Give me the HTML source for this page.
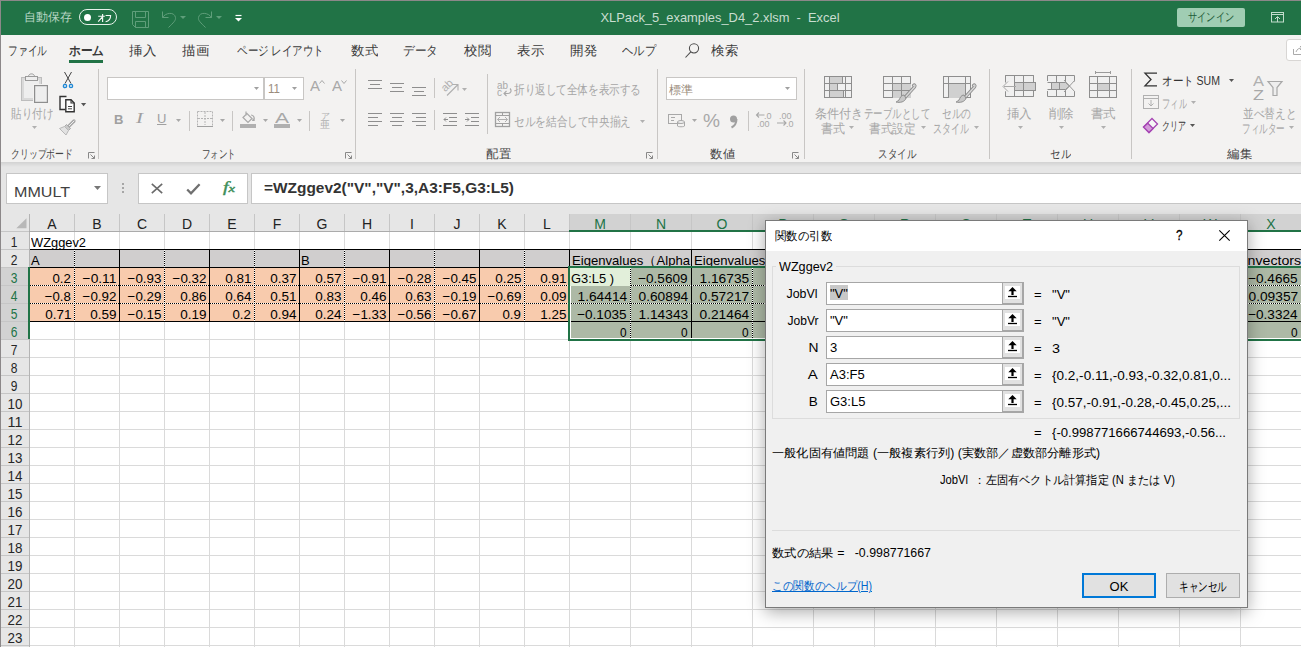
<!DOCTYPE html>
<html><head><meta charset="utf-8"><style>
html,body{margin:0;padding:0;}
body{width:1301px;height:647px;overflow:hidden;position:relative;background:#fff;font-family:"Liberation Sans", sans-serif;}
div{box-sizing:border-box;}
svg{overflow:visible;}
</style></head><body>
<div style="position:absolute;left:0px;top:0px;width:1301px;height:1px;background:#8c8889"></div><div style="position:absolute;left:0px;top:0px;width:1px;height:647px;background:#8c8889"></div><div style="position:absolute;left:1px;top:1px;width:1300px;height:34px;background:#217346"></div><div id="t1" style="position:absolute;left:24px;top:11.34px;font-size:12px;line-height:12px;color:#b8d6c4;white-space:nowrap;transform:scaleX(1.0000);transform-origin:0 50%;">自動保存</div><div style="position:absolute;left:79px;top:9px;width:38px;height:16px;border:1px solid #e8f1eb;border-radius:8px"></div><div style="position:absolute;left:84px;top:14px;width:7px;height:7px;background:#fff;border-radius:50%"></div><svg style="position:absolute;left:97px;top:13px;" width="15" height="10" viewBox="0 0 15 10"><g fill="none" stroke="#f4f8f5" stroke-width="1.15"><path d="M1.2 3.2h6.6M5.6 1v8M5.4 3.8L1.2 8.6M8.6 2.5h5c0 3.2-1.6 5.6-5 6.3"/></g></svg><svg style="position:absolute;left:131px;top:10px;" width="19" height="19" viewBox="0 0 19 19"><g fill="none" stroke="#5f9e7a" stroke-width="1"><path d="M1.5 1.5h16v16h-13l-3-3z"/><path d="M4.5 1.5v6h10v-6"/><path d="M4.5 17.5v-6h10v6"/></g></svg><svg style="position:absolute;left:160px;top:10px;" width="30" height="19" viewBox="0 0 30 19"><g fill="none" stroke="#5f9e7a" stroke-width="1"><path d="M2.5 1.5v6h6"/><path d="M2.5 7.5c3-5 12-6 13 0 .5 3-2 5-7 10"/></g><path d="M20 6h6l-3 3z" fill="#5f9e7a"/></svg><svg style="position:absolute;left:195px;top:10px;" width="30" height="19" viewBox="0 0 30 19"><g fill="none" stroke="#5f9e7a" stroke-width="1"><path d="M16.5 1.5v6h-6"/><path d="M16.5 7.5c-3-5 -12-6 -13 0 -.5 3 2 5 7 10"/></g><path d="M21 6h6l-3 3z" fill="#5f9e7a"/></svg><svg style="position:absolute;left:235px;top:14px;" width="8" height="8" viewBox="0 0 8 8"><path d="M0.5 1.5h6" stroke="#fff" stroke-width="1.2"/><path d="M0 4h7l-3.5 3.5z" fill="#fff"/></svg><div id="t2" style="position:absolute;left:720px;top:11.00px;font-size:13px;line-height:13px;color:#c9ded1;white-space:nowrap;transform:translateX(-50%) scaleX(0.9903);transform-origin:50% 50%;">XLPack_5_examples_D4_2.xlsm&nbsp; - &nbsp;Excel</div><div style="position:absolute;left:1177px;top:8px;width:68px;height:19px;background:#a0cdb3;border-radius:2px"></div><div id="t3" style="position:absolute;left:1211px;top:11.34px;font-size:12px;line-height:12px;color:#1d5a37;white-space:nowrap;transform:translateX(-50%) scaleX(0.7667);transform-origin:50% 50%;">サインイン</div><svg style="position:absolute;left:1270px;top:11px;" width="16" height="13" viewBox="0 0 16 13"><g fill="none" stroke="#c2ddcc" stroke-width="1"><rect x="1.5" y="1.5" width="12" height="9.5"/><path d="M1.5 3.5h12"/><path d="M7.5 11v-5M5 8l2.5-2.5 2.5 2.5"/></g></svg><div style="position:absolute;left:1px;top:35px;width:1300px;height:127px;background:#f3f2f1"></div><div id="t4" style="position:absolute;left:8px;top:44.00px;font-size:13px;line-height:13px;color:#3a3a3a;white-space:nowrap;transform:scaleX(0.7500);transform-origin:0 50%;">ファイル</div><div id="t5" style="position:absolute;left:69px;top:44.00px;font-size:13px;line-height:13px;color:#3a3a3a;white-space:nowrap;transform:scaleX(0.8974);transform-origin:0 50%;"><b>ホーム</b></div><div id="t6" style="position:absolute;left:129px;top:44.00px;font-size:13px;line-height:13px;color:#3a3a3a;white-space:nowrap;transform:scaleX(1.0385);transform-origin:0 50%;">挿入</div><div id="t7" style="position:absolute;left:182px;top:44.00px;font-size:13px;line-height:13px;color:#3a3a3a;white-space:nowrap;transform:scaleX(1.0385);transform-origin:0 50%;">描画</div><div id="t8" style="position:absolute;left:237px;top:44.00px;font-size:13px;line-height:13px;color:#3a3a3a;white-space:nowrap;transform:scaleX(0.8084);transform-origin:0 50%;">ページ レイアウト</div><div id="t9" style="position:absolute;left:351px;top:44.00px;font-size:13px;line-height:13px;color:#3a3a3a;white-space:nowrap;transform:scaleX(1.0385);transform-origin:0 50%;">数式</div><div id="t10" style="position:absolute;left:403px;top:44.00px;font-size:13px;line-height:13px;color:#3a3a3a;white-space:nowrap;transform:scaleX(0.8974);transform-origin:0 50%;">データ</div><div id="t11" style="position:absolute;left:464px;top:44.00px;font-size:13px;line-height:13px;color:#3a3a3a;white-space:nowrap;transform:scaleX(1.0385);transform-origin:0 50%;">校閲</div><div id="t12" style="position:absolute;left:517px;top:44.00px;font-size:13px;line-height:13px;color:#3a3a3a;white-space:nowrap;transform:scaleX(1.0385);transform-origin:0 50%;">表示</div><div id="t13" style="position:absolute;left:570px;top:44.00px;font-size:13px;line-height:13px;color:#3a3a3a;white-space:nowrap;transform:scaleX(1.0385);transform-origin:0 50%;">開発</div><div id="t14" style="position:absolute;left:622px;top:44.00px;font-size:13px;line-height:13px;color:#3a3a3a;white-space:nowrap;transform:scaleX(0.8718);transform-origin:0 50%;">ヘルプ</div><div id="t15" style="position:absolute;left:711px;top:44.00px;font-size:13px;line-height:13px;color:#3a3a3a;white-space:nowrap;transform:scaleX(1.0385);transform-origin:0 50%;">検索</div><div style="position:absolute;left:69px;top:60px;width:34px;height:3px;background:#217346"></div><svg style="position:absolute;left:684px;top:42px;" width="16" height="17" viewBox="0 0 16 17"><g fill="none" stroke="#4a4a4a" stroke-width="1.05"><circle cx="10" cy="6.3" r="4.6"/><path d="M6.8 9.8l-5.3 5.7"/></g></svg><div style="position:absolute;left:1286px;top:39px;width:20px;height:22px;background:#fff;border:1px solid #d8d6d4;border-radius:3px"></div><svg style="position:absolute;left:1293px;top:45px;" width="11" height="10" viewBox="0 0 11 10"><g fill="none" stroke="#aaa" stroke-width="1"><path d="M.5 4v5.5h10"/><path d="M3 7c1-3 3-4 6-4M7 1l2 2-2 2"/></g></svg><div style="position:absolute;left:98px;top:69px;width:1px;height:90px;background:#c8c6c4"></div><div style="position:absolute;left:355px;top:69px;width:1px;height:90px;background:#c8c6c4"></div><div style="position:absolute;left:657px;top:69px;width:1px;height:90px;background:#c8c6c4"></div><div style="position:absolute;left:804px;top:69px;width:1px;height:90px;background:#c8c6c4"></div><div style="position:absolute;left:989px;top:69px;width:1px;height:90px;background:#c8c6c4"></div><div style="position:absolute;left:1131px;top:69px;width:1px;height:90px;background:#c8c6c4"></div><div id="t16" style="position:absolute;left:11px;top:147.84px;font-size:12px;line-height:12px;color:#444;white-space:nowrap;transform:scaleX(0.7381);transform-origin:0 50%;">クリップボード</div><div id="t17" style="position:absolute;left:202px;top:147.84px;font-size:12px;line-height:12px;color:#444;white-space:nowrap;transform:scaleX(0.7083);transform-origin:0 50%;">フォント</div><div id="t18" style="position:absolute;left:486px;top:147.84px;font-size:12px;line-height:12px;color:#444;white-space:nowrap;transform:scaleX(1.0417);transform-origin:0 50%;">配置</div><div id="t19" style="position:absolute;left:710px;top:147.84px;font-size:12px;line-height:12px;color:#444;white-space:nowrap;transform:scaleX(1.0417);transform-origin:0 50%;">数値</div><div id="t20" style="position:absolute;left:878px;top:147.84px;font-size:12px;line-height:12px;color:#444;white-space:nowrap;transform:scaleX(0.7917);transform-origin:0 50%;">スタイル</div><div id="t21" style="position:absolute;left:1050px;top:147.84px;font-size:12px;line-height:12px;color:#444;white-space:nowrap;transform:scaleX(0.8750);transform-origin:0 50%;">セル</div><div id="t22" style="position:absolute;left:1227px;top:147.84px;font-size:12px;line-height:12px;color:#444;white-space:nowrap;transform:scaleX(1.0417);transform-origin:0 50%;">編集</div><svg style="position:absolute;left:88px;top:152px;" width="7" height="7" viewBox="0 0 7 7"><g fill="none" stroke="#888" stroke-width="1"><path d="M.5 6.5v-6h6"/><path d="M2.5 2.5l4 4M6.5 3.5v3h-3"/></g></svg><svg style="position:absolute;left:345px;top:152px;" width="7" height="7" viewBox="0 0 7 7"><g fill="none" stroke="#888" stroke-width="1"><path d="M.5 6.5v-6h6"/><path d="M2.5 2.5l4 4M6.5 3.5v3h-3"/></g></svg><svg style="position:absolute;left:646px;top:152px;" width="7" height="7" viewBox="0 0 7 7"><g fill="none" stroke="#888" stroke-width="1"><path d="M.5 6.5v-6h6"/><path d="M2.5 2.5l4 4M6.5 3.5v3h-3"/></g></svg><svg style="position:absolute;left:792px;top:152px;" width="7" height="7" viewBox="0 0 7 7"><g fill="none" stroke="#888" stroke-width="1"><path d="M.5 6.5v-6h6"/><path d="M2.5 2.5l4 4M6.5 3.5v3h-3"/></g></svg><svg style="position:absolute;left:20px;top:72px;" width="30" height="32" viewBox="0 0 30 32"><rect x="1.5" y="5.5" width="20" height="23" fill="#d9d9d9" stroke="#bdbdbd"/><rect x="4" y="8" width="15" height="18" fill="#eeeeee"/><path d="M8.5 4.5c0-3.5 6-3.5 6 0" fill="#eee" stroke="#9a9a9a"/><rect x="5.5" y="4.5" width="12" height="4" fill="#eee" stroke="#9a9a9a"/><rect x="13" y="12" width="16" height="20" fill="#f3f2f1"/><rect x="14.6" y="13.6" width="12.8" height="16.8" fill="#eee" stroke="#8e8e8e" stroke-width="1.2"/></svg><div id="t23" style="position:absolute;left:11px;top:107.00px;font-size:13px;line-height:13px;color:#a6a6a6;white-space:nowrap;transform:scaleX(0.8077);transform-origin:0 50%;">貼り付け</div><svg style="position:absolute;left:32px;top:126px;" width="6" height="4" viewBox="0 0 6 4"><path d="M0 0h5l-2.5 3z" fill="#b0b0b0"/></svg><svg style="position:absolute;left:62px;top:71px;" width="12" height="18" viewBox="0 0 12 18"><g fill="none" stroke="#444" stroke-width="1"><path d="M2.5 1l6.5 11.5M9.5 1l-6.5 11.5"/></g><g fill="none" stroke="#1e88d6" stroke-width="1.4"><circle cx="3" cy="15" r="1.6"/><circle cx="9" cy="15" r="1.6"/></g></svg><svg style="position:absolute;left:58px;top:95px;" width="19" height="18" viewBox="0 0 19 18"><path d="M8.5 1.5h-6.5v13h5" fill="#fafafa" stroke="#333" stroke-width="1.4"/><path d="M7.8 4.8h5.2l3.2 3.2v8.7h-8.4z" fill="#fff" stroke="#333" stroke-width="1.4"/><path d="M13 4.8v3.2h3.2" fill="none" stroke="#333" stroke-width="1.1"/><path d="M10 11.5h4M10 13.8h4" stroke="#444" stroke-width="1"/></svg><svg style="position:absolute;left:81px;top:103px;" width="6" height="4" viewBox="0 0 6 4"><path d="M0 0h5.2l-2.6 3.2z" fill="#555"/></svg><svg style="position:absolute;left:59px;top:119px;" width="17" height="17" viewBox="0 0 17 17"><path d="M15 2l-5.5 5.5" stroke="#a8a8a8" stroke-width="3.2" stroke-linecap="round"/><path d="M15 2l-5.5 5.5" stroke="#f0f0f0" stroke-width="1" stroke-linecap="round"/><path d="M7.5 5.5l4 4-2 2-4-4z" fill="#c8c8c8" stroke="#a8a8a8"/><path d="M5.5 7.5l4 4-2.5 4.5-6.5-6.5z" fill="#e2e2e2" stroke="#b8b8b8"/></svg><div style="position:absolute;left:107px;top:77px;width:157px;height:23px;background:#fff;border:1px solid #c8c6c4"></div><div style="position:absolute;left:264px;top:77px;width:40px;height:23px;background:#fff;border:1px solid #c8c6c4"></div><svg style="position:absolute;left:254px;top:87px;" width="6" height="4" viewBox="0 0 6 4"><path d="M0 0h5l-2.5 3z" fill="#a0a0a0"/></svg><svg style="position:absolute;left:292px;top:87px;" width="6" height="4" viewBox="0 0 6 4"><path d="M0 0h5l-2.5 3z" fill="#a0a0a0"/></svg><div id="t24" style="position:absolute;left:268px;top:82.84px;font-size:12px;line-height:12px;color:#9a8c7c;white-space:nowrap;transform:scaleX(0.9624);transform-origin:0 50%;">11</div><div id="t25" style="position:absolute;left:310px;top:79.15px;font-size:14px;line-height:14px;color:#a8a8a8;white-space:nowrap;transform:scaleX(1.0702);transform-origin:0 50%;">A</div><svg style="position:absolute;left:319px;top:80px;" width="6" height="4" viewBox="0 0 6 4"><path d="M.5 3.5l2.5-3 2.5 3" fill="none" stroke="#a8a8a8"/></svg><div id="t26" style="position:absolute;left:332px;top:79.15px;font-size:14px;line-height:14px;color:#a8a8a8;white-space:nowrap;transform:scaleX(1.0702);transform-origin:0 50%;">A</div><svg style="position:absolute;left:341px;top:80px;" width="6" height="4" viewBox="0 0 6 4"><path d="M.5 .5l2.5 3 2.5-3" fill="none" stroke="#a8a8a8"/></svg><div style="position:absolute;left:114px;top:113.00px;font-size:13px;line-height:13px;color:#a0a0a0;white-space:nowrap;"><b>B</b></div><div id="t28" style="position:absolute;left:136px;top:112.15px;font-size:14px;line-height:14px;color:#a0a0a0;white-space:nowrap;transform:scaleX(1.4983);transform-origin:0 50%;font-family:&quot;Liberation Serif&quot;,serif"><i>I</i></div><div style="position:absolute;left:157px;top:112.00px;font-size:13px;line-height:13px;color:#a0a0a0;white-space:nowrap;"><u>U</u></div><svg style="position:absolute;left:176px;top:119px;" width="6" height="4" viewBox="0 0 6 4"><path d="M0 0h5l-2.5 3z" fill="#a8a8a8"/></svg><div style="position:absolute;left:189px;top:111px;width:1px;height:20px;background:#c8c6c4"></div><svg style="position:absolute;left:197px;top:111px;" width="16" height="16" viewBox="0 0 16 16"><g fill="none" stroke="#b4b4b4" stroke-width="1" stroke-dasharray="2 1"><path d="M.5 .5h15v14M.5 .5v14M8 1v13M1 7.5h14"/></g><path d="M0 15.5h16" stroke="#a0a0a0" stroke-width="1"/></svg><svg style="position:absolute;left:220px;top:119px;" width="6" height="4" viewBox="0 0 6 4"><path d="M0 0h5l-2.5 3z" fill="#a8a8a8"/></svg><div style="position:absolute;left:232px;top:111px;width:1px;height:20px;background:#c8c6c4"></div><svg style="position:absolute;left:240px;top:110px;" width="17" height="19" viewBox="0 0 17 19"><g fill="none" stroke="#a8a8a8" stroke-width="1.2"><path d="M6 1.5v4M3 7.5l4-4 5 5-4 4z"/><path d="M11 5c2 0 4 2 3 5"/></g><path d="M13 8l2 3h-3z" fill="#a8a8a8"/><rect x="0" y="14" width="16" height="4" fill="#b0b0b0"/></svg><svg style="position:absolute;left:263px;top:119px;" width="6" height="4" viewBox="0 0 6 4"><path d="M0 0h5l-2.5 3z" fill="#a8a8a8"/></svg><div id="t30" style="position:absolute;left:275px;top:110.30px;font-size:15px;line-height:15px;color:#a8a8a8;white-space:nowrap;transform:scaleX(1.3978);transform-origin:0 50%;">A</div><div style="position:absolute;left:274px;top:124px;width:16px;height:4px;background:#b0b0b0"></div><svg style="position:absolute;left:297px;top:119px;" width="6" height="4" viewBox="0 0 6 4"><path d="M0 0h5l-2.5 3z" fill="#a8a8a8"/></svg><div style="position:absolute;left:309px;top:111px;width:1px;height:20px;background:#c8c6c4"></div><div style="position:absolute;left:321px;top:112.38px;font-size:9px;line-height:9px;color:#b0b0b0;white-space:nowrap;">ア</div><div style="position:absolute;left:320px;top:119.53px;font-size:10px;line-height:10px;color:#b0b0b0;white-space:nowrap;">亜</div><svg style="position:absolute;left:340px;top:119px;" width="6" height="4" viewBox="0 0 6 4"><path d="M0 0h5l-2.5 3z" fill="#a8a8a8"/></svg><svg style="position:absolute;left:368px;top:80px;" width="16" height="16" viewBox="0 0 16 16"><path d="M0 0.5h14" stroke="#8e8e8e" stroke-width="1"/><path d="M2 4.5h10" stroke="#8e8e8e" stroke-width="1"/><path d="M0 8.5h14" stroke="#8e8e8e" stroke-width="1"/></svg><svg style="position:absolute;left:390px;top:83px;" width="16" height="16" viewBox="0 0 16 16"><path d="M0 0.5h14" stroke="#8e8e8e" stroke-width="1"/><path d="M2 4.5h10" stroke="#8e8e8e" stroke-width="1"/><path d="M0 8.5h14" stroke="#8e8e8e" stroke-width="1"/></svg><svg style="position:absolute;left:412px;top:87px;" width="16" height="16" viewBox="0 0 16 16"><path d="M0 0.5h14" stroke="#8e8e8e" stroke-width="1"/><path d="M2 4.5h10" stroke="#8e8e8e" stroke-width="1"/><path d="M0 8.5h14" stroke="#8e8e8e" stroke-width="1"/></svg><div style="position:absolute;left:434px;top:78px;width:1px;height:20px;background:#c8c6c4"></div><svg style="position:absolute;left:446px;top:83px;" width="13" height="13" viewBox="0 0 13 13"><g fill="none" stroke="#b0b0b0" stroke-width="1.1"><path d="M1 12.5l11-11M6 1.5h6v6"/></g></svg><div style="position:absolute;left:441px;top:79.69px;font-size:11px;line-height:11px;color:#b0b0b0;white-space:nowrap;transform:rotate(-45deg);transform-origin:50% 50%">ab</div><svg style="position:absolute;left:462px;top:88px;" width="6" height="4" viewBox="0 0 6 4"><path d="M0 0h5l-2.5 3z" fill="#b0b0b0"/></svg><svg style="position:absolute;left:368px;top:113px;" width="16" height="16" viewBox="0 0 16 16"><path d="M0 0.5h14" stroke="#8e8e8e" stroke-width="1"/><path d="M0 4.5h10" stroke="#8e8e8e" stroke-width="1"/><path d="M0 8.5h14" stroke="#8e8e8e" stroke-width="1"/><path d="M0 12.5h10" stroke="#8e8e8e" stroke-width="1"/></svg><svg style="position:absolute;left:390px;top:113px;" width="16" height="16" viewBox="0 0 16 16"><path d="M0 0.5h14" stroke="#8e8e8e" stroke-width="1"/><path d="M2 4.5h10" stroke="#8e8e8e" stroke-width="1"/><path d="M0 8.5h14" stroke="#8e8e8e" stroke-width="1"/><path d="M2 12.5h10" stroke="#8e8e8e" stroke-width="1"/></svg><svg style="position:absolute;left:412px;top:113px;" width="16" height="16" viewBox="0 0 16 16"><path d="M0 0.5h14" stroke="#8e8e8e" stroke-width="1"/><path d="M4 4.5h10" stroke="#8e8e8e" stroke-width="1"/><path d="M0 8.5h14" stroke="#8e8e8e" stroke-width="1"/><path d="M4 12.5h10" stroke="#8e8e8e" stroke-width="1"/></svg><div style="position:absolute;left:434px;top:110px;width:1px;height:20px;background:#c8c6c4"></div><svg style="position:absolute;left:443px;top:113px;" width="16" height="14" viewBox="0 0 16 14"><g fill="none" stroke="#8e8e8e" stroke-width="1"><path d="M0 .5h14M6 4.5h8M6 8.5h8M0 12.5h14M1 6.5h4M3 4.5l-2 2 2 2"/></g></svg><svg style="position:absolute;left:465px;top:113px;" width="16" height="14" viewBox="0 0 16 14"><g fill="none" stroke="#8e8e8e" stroke-width="1"><path d="M0 .5h14M6 4.5h8M6 8.5h8M0 12.5h14M0 6.5h4M2 4.5l2 2-2 2"/></g></svg><div style="position:absolute;left:487px;top:74px;width:1px;height:60px;background:#c8c6c4"></div><div id="t34" style="position:absolute;left:497px;top:79.69px;font-size:11px;line-height:11px;color:#a8a8a8;white-space:nowrap;transform:scaleX(0.8980);transform-origin:0 50%;">ab</div><div id="t35" style="position:absolute;left:497px;top:86.69px;font-size:11px;line-height:11px;color:#a8a8a8;white-space:nowrap;transform:scaleX(0.9091);transform-origin:0 50%;">c</div><svg style="position:absolute;left:503px;top:88px;" width="9" height="9" viewBox="0 0 9 9"><path d="M7 .5c2 2 1 5-2 5h-4M3.5 3l-2.5 2.5 2.5 2.5" fill="none" stroke="#a8a8a8" stroke-width="1.1"/></svg><div id="t36" style="position:absolute;left:514px;top:83.00px;font-size:13px;line-height:13px;color:#a6a6a6;white-space:nowrap;transform:scaleX(0.8141);transform-origin:0 50%;">折り返して全体を表示する</div><svg style="position:absolute;left:495px;top:112px;" width="16" height="16" viewBox="0 0 16 16"><g fill="none" stroke="#a0a0a0" stroke-width="1"><rect x=".5" y=".5" width="14" height="14" stroke-width="1.3"/><path d="M.5 3.5h14M.5 11.5h14M7.5 0v3.5M7.5 11.5v3.5"/><path d="M2.5 7.5h10M5 5l-2.5 2.5 2.5 2.5M10 5l2.5 2.5-2.5 2.5" stroke="#b0b0b0"/></g></svg><div id="t37" style="position:absolute;left:514px;top:115.00px;font-size:13px;line-height:13px;color:#a6a6a6;white-space:nowrap;transform:scaleX(0.8182);transform-origin:0 50%;">セルを結合して中央揃え</div><svg style="position:absolute;left:640px;top:120px;" width="6" height="4" viewBox="0 0 6 4"><path d="M0 0h5l-2.5 3z" fill="#b0b0b0"/></svg><div style="position:absolute;left:666px;top:77px;width:131px;height:23px;background:#fff;border:1px solid #c8c6c4"></div><div id="t38" style="position:absolute;left:669px;top:83.84px;font-size:12px;line-height:12px;color:#9a8c7c;white-space:nowrap;transform:scaleX(1.0000);transform-origin:0 50%;">標準</div><svg style="position:absolute;left:785px;top:87px;" width="6" height="4" viewBox="0 0 6 4"><path d="M0 0h5l-2.5 3z" fill="#a0a0a0"/></svg><svg style="position:absolute;left:668px;top:113px;" width="18" height="15" viewBox="0 0 18 15"><g fill="none" stroke="#a8a8a8" stroke-width="1"><rect x=".5" y="1.5" width="13" height="9"/><path d="M3 4.5h4M3 7.5h3"/><ellipse cx="13" cy="9" rx="3.5" ry="1.5" fill="#eee"/><path d="M9.5 9v4c0 1 7 1 7 0v-4"/></g></svg><svg style="position:absolute;left:692px;top:119px;" width="6" height="4" viewBox="0 0 6 4"><path d="M0 0h5l-2.5 3z" fill="#a8a8a8"/></svg><div id="t39" style="position:absolute;left:703px;top:110.92px;font-size:19px;line-height:19px;color:#a8a8a8;white-space:nowrap;transform:scaleX(1.0055);transform-origin:0 50%;">%</div><svg style="position:absolute;left:729px;top:115px;" width="9" height="13" viewBox="0 0 9 13"><circle cx="4.5" cy="4" r="3.5" fill="#a0a0a0"/><path d="M7.5 4c0 4-2 7-5 8.5" stroke="#a0a0a0" stroke-width="2" fill="none"/></svg><div style="position:absolute;left:748px;top:111px;width:1px;height:20px;background:#c8c6c4"></div><div style="position:absolute;left:764px;top:112.38px;font-size:9px;line-height:9px;color:#a8a8a8;white-space:nowrap;">.0</div><div style="position:absolute;left:757px;top:119.88px;font-size:9px;line-height:9px;color:#a8a8a8;white-space:nowrap;">.00</div><svg style="position:absolute;left:755px;top:111px;" width="10" height="8" viewBox="0 0 10 8"><path d="M9.5 4h-8M4 1.5l-2.5 2.5 2.5 2.5" fill="none" stroke="#a8a8a8" stroke-width="1.1"/></svg><div style="position:absolute;left:779px;top:112.38px;font-size:9px;line-height:9px;color:#a8a8a8;white-space:nowrap;">.00</div><div style="position:absolute;left:786px;top:119.88px;font-size:9px;line-height:9px;color:#a8a8a8;white-space:nowrap;">.0</div><svg style="position:absolute;left:777px;top:119px;" width="11" height="8" viewBox="0 0 11 8"><path d="M0 4h9M6.5 1.5l2.5 2.5-2.5 2.5" fill="none" stroke="#a8a8a8" stroke-width="1.1"/></svg><svg style="position:absolute;left:824px;top:76px;" width="40" height="30" viewBox="0 0 40 30"><rect x=".5" y=".5" width="27" height="21" fill="#f0f0f0" stroke="#8e8e8e"/><rect x="6" y="1" width="12" height="6" fill="#d0d0d0"/><rect x="6" y="8" width="7" height="6" fill="#d0d0d0"/><rect x="6" y="15" width="13" height="6" fill="#d0d0d0"/><path d="M5.5 0v22M21.5 0v22M0 7.5h28M0 14.5h28M18.5 1v6M13.5 8v6M19.5 15v6" stroke="#8e8e8e"/></svg><svg style="position:absolute;left:883px;top:76px;" width="40" height="30" viewBox="0 0 40 30"><rect x=".5" y=".5" width="27" height="21" fill="#f0f0f0" stroke="#8e8e8e"/><rect x="10" y="8" width="18" height="14" fill="#d0d0d0"/><path d="M9.5 0v22M18.5 0v22M0 7.5h28M0 14.5h28" stroke="#8e8e8e"/><path d="M30.5 9.5c1-1 2 0 1.2 1.2l-10 11" stroke="#8e8e8e" stroke-width="3.2" stroke-linecap="round" fill="none"/><path d="M30.5 9.5c1-1 2 0 1.2 1.2l-10 11" stroke="#d8d8d8" stroke-width="1.4" stroke-linecap="round" fill="none"/><path d="M21 19c-3 0-4 3-5 5-1 1-3 2-3 2 4 1 9 0 10-4z" fill="#c8c8c8" stroke="#8e8e8e" stroke-width="1"/></svg><svg style="position:absolute;left:943px;top:76px;" width="40" height="30" viewBox="0 0 40 30"><rect x=".5" y=".5" width="27" height="21" fill="#f0f0f0" stroke="#8e8e8e"/><rect x="6" y="8" width="17" height="14" fill="#d0d0d0"/><path d="M5.5 0v22M22.5 0v22M0 7.5h28" stroke="#8e8e8e"/><path d="M30.5 9.5c1-1 2 0 1.2 1.2l-10 11" stroke="#8e8e8e" stroke-width="3.2" stroke-linecap="round" fill="none"/><path d="M30.5 9.5c1-1 2 0 1.2 1.2l-10 11" stroke="#d8d8d8" stroke-width="1.4" stroke-linecap="round" fill="none"/><path d="M21 19c-3 0-4 3-5 5-1 1-3 2-3 2 4 1 9 0 10-4z" fill="#c8c8c8" stroke="#8e8e8e" stroke-width="1"/></svg><div id="t44" style="position:absolute;left:815px;top:107.00px;font-size:13px;line-height:13px;color:#a6a6a6;white-space:nowrap;transform:scaleX(0.9327);transform-origin:0 50%;">条件付き</div><div id="t45" style="position:absolute;left:821px;top:122.00px;font-size:13px;line-height:13px;color:#a6a6a6;white-space:nowrap;transform:scaleX(0.9231);transform-origin:0 50%;">書式</div><svg style="position:absolute;left:849px;top:126px;" width="6" height="4" viewBox="0 0 6 4"><path d="M0 0h5l-2.5 3z" fill="#b0b0b0"/></svg><div id="t46" style="position:absolute;left:864px;top:107.00px;font-size:13px;line-height:13px;color:#a6a6a6;white-space:nowrap;transform:scaleX(0.7253);transform-origin:0 50%;">テーブルとして</div><div id="t47" style="position:absolute;left:869px;top:122.00px;font-size:13px;line-height:13px;color:#a6a6a6;white-space:nowrap;transform:scaleX(0.9038);transform-origin:0 50%;">書式設定</div><svg style="position:absolute;left:921px;top:126px;" width="6" height="4" viewBox="0 0 6 4"><path d="M0 0h5l-2.5 3z" fill="#b0b0b0"/></svg><div id="t48" style="position:absolute;left:942px;top:107.00px;font-size:13px;line-height:13px;color:#a6a6a6;white-space:nowrap;transform:scaleX(0.7436);transform-origin:0 50%;">セルの</div><div id="t49" style="position:absolute;left:933px;top:122.00px;font-size:13px;line-height:13px;color:#a6a6a6;white-space:nowrap;transform:scaleX(0.6923);transform-origin:0 50%;">スタイル</div><svg style="position:absolute;left:974px;top:126px;" width="6" height="4" viewBox="0 0 6 4"><path d="M0 0h5l-2.5 3z" fill="#b0b0b0"/></svg><svg style="position:absolute;left:1002px;top:75px;" width="36" height="24" viewBox="0 0 36 24"><path d="M3.5 7v-6.5h28v21h-28v-5M3.5 7v-0" fill="none" stroke="#8e8e8e"/><rect x="4" y="1" width="27" height="6" fill="#f0f0f0"/><rect x="4" y="15" width="27" height="6" fill="#f0f0f0"/><path d="M3.5 .5h28v21h-28v-5M3.5 7.5v-7" fill="none" stroke="#8e8e8e"/><path d="M12.5 1v6M21.5 1v6M12.5 15v7M21.5 15v7" stroke="#8e8e8e"/><rect x="12.5" y="7.5" width="21" height="8" fill="#d0d0d0" stroke="#8e8e8e"/><path d="M21.5 8v7" stroke="#8e8e8e"/><path d="M14 11.5h-12M6 6.5l-5 5 5 5" fill="none" stroke="#a8a8a8" stroke-width="1"/></svg><svg style="position:absolute;left:1046px;top:75px;" width="32" height="24" viewBox="0 0 32 24"><rect x="1" y="1" width="27" height="6" fill="#f0f0f0"/><rect x="1" y="15" width="27" height="6" fill="#f0f0f0"/><path d="M1.5 6v-5.5h27v6M1.5 16v5.5h27v-5M1.5 7.5h18M1.5 14.5h18M10.5 1v6M19.5 1v6M10.5 15v6M19.5 15v6" fill="none" stroke="#8e8e8e"/><path d="M5.5 7.5h14l4 3.5-4 3.5h-14z" fill="#d0d0d0" stroke="#8e8e8e"/><path d="M13.5 8v6" stroke="#8e8e8e"/><path d="M18 5l11 12M29 5l-11 12" stroke="#9a9a9a"/></svg><svg style="position:absolute;left:1089px;top:70px;" width="30" height="30" viewBox="0 0 30 30"><rect x=".5" y="6.5" width="27" height="21" fill="#f0f0f0" stroke="#8e8e8e"/><rect x="8" y="13" width="13" height="7" fill="#d0d0d0"/><path d="M8.5 6v22M20.5 6v22M0 13.5h28M0 20.5h28" stroke="#8e8e8e"/><path d="M6.5 2.5h15M6.5 1v3M21.5 1v3" stroke="#9a9a9a"/></svg><div id="t50" style="position:absolute;left:1007px;top:107.00px;font-size:13px;line-height:13px;color:#a6a6a6;white-space:nowrap;transform:scaleX(0.9615);transform-origin:0 50%;">挿入</div><div id="t51" style="position:absolute;left:1049px;top:107.00px;font-size:13px;line-height:13px;color:#a6a6a6;white-space:nowrap;transform:scaleX(0.9615);transform-origin:0 50%;">削除</div><div id="t52" style="position:absolute;left:1091px;top:107.00px;font-size:13px;line-height:13px;color:#a6a6a6;white-space:nowrap;transform:scaleX(0.9615);transform-origin:0 50%;">書式</div><svg style="position:absolute;left:1018px;top:126px;" width="6" height="4" viewBox="0 0 6 4"><path d="M0 0h5l-2.5 3z" fill="#b0b0b0"/></svg><svg style="position:absolute;left:1059px;top:126px;" width="6" height="4" viewBox="0 0 6 4"><path d="M0 0h5l-2.5 3z" fill="#b0b0b0"/></svg><svg style="position:absolute;left:1101px;top:126px;" width="6" height="4" viewBox="0 0 6 4"><path d="M0 0h5l-2.5 3z" fill="#b0b0b0"/></svg><svg style="position:absolute;left:1144px;top:72px;" width="14" height="15" viewBox="0 0 14 15"><path d="M13 1.2h-12l6 6.3-6 6.3h12" fill="none" stroke="#333" stroke-width="1.3"/></svg><div id="t53" style="position:absolute;left:1162px;top:74.84px;font-size:12px;line-height:12px;color:#333;white-space:nowrap;transform:scaleX(0.8788);transform-origin:0 50%;">オート SUM</div><svg style="position:absolute;left:1229px;top:79px;" width="6" height="4" viewBox="0 0 6 4"><path d="M0 0h5l-2.5 3z" fill="#555"/></svg><svg style="position:absolute;left:1143px;top:95px;" width="17" height="15" viewBox="0 0 17 15"><g fill="none" stroke="#b0b0b0" stroke-width="1"><rect x=".5" y=".5" width="15" height="13"/><path d="M.5 3.5h15M8 5v6M5.5 8.5l2.5 2.5 2.5-2.5"/></g></svg><div id="t54" style="position:absolute;left:1162px;top:97.00px;font-size:13px;line-height:13px;color:#a6a6a6;white-space:nowrap;transform:scaleX(0.6410);transform-origin:0 50%;">フィル</div><svg style="position:absolute;left:1191px;top:101px;" width="6" height="4" viewBox="0 0 6 4"><path d="M0 0h5l-2.5 3z" fill="#b0b0b0"/></svg><svg style="position:absolute;left:1142px;top:117px;" width="17" height="17" viewBox="0 0 17 17"><path d="M10 1.5l5.5 5.5-8.5 8.5-5.5-5.5z" fill="#f6f6f6" stroke="#a544b3" stroke-width="1.3"/><path d="M5.8 6.2l5.3 5.3-4.1 4-5.4-5.4z" fill="#d39ad9" stroke="#a544b3" stroke-width="1.3"/></svg><div id="t55" style="position:absolute;left:1162px;top:119.84px;font-size:12px;line-height:12px;color:#333;white-space:nowrap;transform:scaleX(0.6667);transform-origin:0 50%;">クリア</div><svg style="position:absolute;left:1190px;top:124px;" width="6" height="4" viewBox="0 0 6 4"><path d="M0 0h5l-2.5 3z" fill="#555"/></svg><div id="t56" style="position:absolute;left:1253px;top:73.30px;font-size:15px;line-height:15px;color:#b0b0b0;white-space:nowrap;transform:scaleX(1.0983);transform-origin:0 50%;font-weight:300">A</div><div id="t57" style="position:absolute;left:1253px;top:87.30px;font-size:15px;line-height:15px;color:#a8a8a8;white-space:nowrap;transform:scaleX(1.1993);transform-origin:0 50%;">Z</div><svg style="position:absolute;left:1267px;top:80px;" width="16" height="17" viewBox="0 0 16 17"><path d="M1 1.5h14l-5 6v8h-4v-8z" fill="#eee" stroke="#a8a8a8" stroke-width="1.2"/></svg><div id="t58" style="position:absolute;left:1243px;top:107.00px;font-size:13px;line-height:13px;color:#a6a6a6;white-space:nowrap;transform:scaleX(0.8231);transform-origin:0 50%;">並べ替えと</div><div id="t59" style="position:absolute;left:1242px;top:122.00px;font-size:13px;line-height:13px;color:#a6a6a6;white-space:nowrap;transform:scaleX(0.6615);transform-origin:0 50%;">フィルター</div><svg style="position:absolute;left:1289px;top:126px;" width="6" height="4" viewBox="0 0 6 4"><path d="M0 0h5l-2.5 3z" fill="#b0b0b0"/></svg><div style="position:absolute;left:1px;top:162px;width:1300px;height:52px;background:#e6e6e6"></div><div style="position:absolute;left:1px;top:162px;width:1300px;height:5px;background:linear-gradient(#d2d2d2,#e6e6e6)"></div><div style="position:absolute;left:6px;top:173px;width:102px;height:31px;background:#fff;border:1px solid #c6c6c6"></div><div id="t60" style="position:absolute;left:14px;top:184.30px;font-size:15px;line-height:15px;color:#404040;white-space:nowrap;transform:scaleX(1.0724);transform-origin:0 50%;">MMULT</div><svg style="position:absolute;left:94px;top:186px;" width="8" height="5" viewBox="0 0 8 5"><path d="M0 0h7l-3.5 4z" fill="#777"/></svg><div style="position:absolute;left:122px;top:183px;width:2px;height:2px;background:#a6a6a6"></div><div style="position:absolute;left:122px;top:187px;width:2px;height:2px;background:#a6a6a6"></div><div style="position:absolute;left:122px;top:191px;width:2px;height:2px;background:#a6a6a6"></div><div style="position:absolute;left:138px;top:173px;width:110px;height:31px;background:#fff;border:1px solid #c6c6c6"></div><svg style="position:absolute;left:151px;top:183px;" width="12" height="11" viewBox="0 0 12 11"><path d="M.8 .8l10.4 9.4M11.2 .8l-10.4 9.4" stroke="#6a6a6a" stroke-width="1.6"/></svg><svg style="position:absolute;left:186px;top:183px;" width="15" height="12" viewBox="0 0 15 12"><path d="M1.2 6.5l3.8 3.8 8.6-9" fill="none" stroke="#707070" stroke-width="2.3"/></svg><div id="t61" style="position:absolute;left:223px;top:180.30px;font-size:15px;line-height:15px;color:#3d8f5a;white-space:nowrap;transform:scaleX(1.3241);transform-origin:0 50%;font-family:&quot;Liberation Serif&quot;,serif;-webkit-text-stroke:0.4px #3d8f5a"><i>f</i><span style="font-size:11px"><i>x</i></span></div><div style="position:absolute;left:251px;top:173px;width:1060px;height:31px;background:#fff;border:1px solid #c6c6c6"></div><div id="t62" style="position:absolute;left:264px;top:180.30px;font-size:15px;line-height:15px;color:#333;white-space:nowrap;transform:scaleX(1.0285);transform-origin:0 50%;font-weight:bold">=WZggev2(&quot;V&quot;,&quot;V&quot;,3,A3:F5,G3:L5)</div><div style="position:absolute;left:1px;top:214px;width:1300px;height:17px;background:#e6e6e6"></div><div style="position:absolute;left:1px;top:214px;width:28px;height:433px;background:#e6e6e6"></div><div style="position:absolute;left:570px;top:214px;width:731px;height:17px;background:#d2d2d2"></div><div style="position:absolute;left:1px;top:268px;width:28px;height:72px;background:#d2d2d2"></div><div style="position:absolute;left:29px;top:214px;width:1px;height:17px;background:#c6c6c6"></div><div style="position:absolute;left:74px;top:214px;width:1px;height:17px;background:#c6c6c6"></div><div style="position:absolute;left:119px;top:214px;width:1px;height:17px;background:#c6c6c6"></div><div style="position:absolute;left:164px;top:214px;width:1px;height:17px;background:#c6c6c6"></div><div style="position:absolute;left:209px;top:214px;width:1px;height:17px;background:#c6c6c6"></div><div style="position:absolute;left:254px;top:214px;width:1px;height:17px;background:#c6c6c6"></div><div style="position:absolute;left:299px;top:214px;width:1px;height:17px;background:#c6c6c6"></div><div style="position:absolute;left:344px;top:214px;width:1px;height:17px;background:#c6c6c6"></div><div style="position:absolute;left:389px;top:214px;width:1px;height:17px;background:#c6c6c6"></div><div style="position:absolute;left:434px;top:214px;width:1px;height:17px;background:#c6c6c6"></div><div style="position:absolute;left:479px;top:214px;width:1px;height:17px;background:#c6c6c6"></div><div style="position:absolute;left:524px;top:214px;width:1px;height:17px;background:#c6c6c6"></div><div style="position:absolute;left:569px;top:214px;width:1px;height:17px;background:#c6c6c6"></div><div style="position:absolute;left:630px;top:214px;width:1px;height:17px;background:#c6c6c6"></div><div style="position:absolute;left:691px;top:214px;width:1px;height:17px;background:#c6c6c6"></div><div style="position:absolute;left:752px;top:214px;width:1px;height:17px;background:#c6c6c6"></div><div style="position:absolute;left:813px;top:214px;width:1px;height:17px;background:#c6c6c6"></div><div style="position:absolute;left:874px;top:214px;width:1px;height:17px;background:#c6c6c6"></div><div style="position:absolute;left:935px;top:214px;width:1px;height:17px;background:#c6c6c6"></div><div style="position:absolute;left:996px;top:214px;width:1px;height:17px;background:#c6c6c6"></div><div style="position:absolute;left:1057px;top:214px;width:1px;height:17px;background:#c6c6c6"></div><div style="position:absolute;left:1118px;top:214px;width:1px;height:17px;background:#c6c6c6"></div><div style="position:absolute;left:1179px;top:214px;width:1px;height:17px;background:#c6c6c6"></div><div style="position:absolute;left:1240px;top:214px;width:1px;height:17px;background:#c6c6c6"></div><div style="position:absolute;left:1301px;top:214px;width:1px;height:17px;background:#c6c6c6"></div><div style="position:absolute;left:1px;top:231px;width:29px;height:1px;background:#c6c6c6"></div><div style="position:absolute;left:1px;top:249px;width:29px;height:1px;background:#c6c6c6"></div><div style="position:absolute;left:1px;top:267px;width:29px;height:1px;background:#c6c6c6"></div><div style="position:absolute;left:1px;top:285px;width:29px;height:1px;background:#c6c6c6"></div><div style="position:absolute;left:1px;top:303px;width:29px;height:1px;background:#c6c6c6"></div><div style="position:absolute;left:1px;top:321px;width:29px;height:1px;background:#c6c6c6"></div><div style="position:absolute;left:1px;top:339px;width:29px;height:1px;background:#c6c6c6"></div><div style="position:absolute;left:1px;top:357px;width:29px;height:1px;background:#c6c6c6"></div><div style="position:absolute;left:1px;top:375px;width:29px;height:1px;background:#c6c6c6"></div><div style="position:absolute;left:1px;top:393px;width:29px;height:1px;background:#c6c6c6"></div><div style="position:absolute;left:1px;top:411px;width:29px;height:1px;background:#c6c6c6"></div><div style="position:absolute;left:1px;top:429px;width:29px;height:1px;background:#c6c6c6"></div><div style="position:absolute;left:1px;top:447px;width:29px;height:1px;background:#c6c6c6"></div><div style="position:absolute;left:1px;top:465px;width:29px;height:1px;background:#c6c6c6"></div><div style="position:absolute;left:1px;top:483px;width:29px;height:1px;background:#c6c6c6"></div><div style="position:absolute;left:1px;top:501px;width:29px;height:1px;background:#c6c6c6"></div><div style="position:absolute;left:1px;top:519px;width:29px;height:1px;background:#c6c6c6"></div><div style="position:absolute;left:1px;top:537px;width:29px;height:1px;background:#c6c6c6"></div><div style="position:absolute;left:1px;top:555px;width:29px;height:1px;background:#c6c6c6"></div><div style="position:absolute;left:1px;top:573px;width:29px;height:1px;background:#c6c6c6"></div><div style="position:absolute;left:1px;top:591px;width:29px;height:1px;background:#c6c6c6"></div><div style="position:absolute;left:1px;top:609px;width:29px;height:1px;background:#c6c6c6"></div><div style="position:absolute;left:1px;top:627px;width:29px;height:1px;background:#c6c6c6"></div><div style="position:absolute;left:1px;top:645px;width:29px;height:1px;background:#c6c6c6"></div><div style="position:absolute;left:29px;top:214px;width:1px;height:433px;background:#b4b4b4"></div><svg style="position:absolute;left:16px;top:218px;" width="11" height="11" viewBox="0 0 11 11"><path d="M10.5 .3v10h-10.2z" fill="#b8b8b8"/></svg><div style="position:absolute;left:52.0px;top:217.15px;font-size:14px;line-height:14px;color:#222;white-space:nowrap;transform:translateX(-50%) ;transform-origin:50% 50%;">A</div><div style="position:absolute;left:97.0px;top:217.15px;font-size:14px;line-height:14px;color:#222;white-space:nowrap;transform:translateX(-50%) ;transform-origin:50% 50%;">B</div><div style="position:absolute;left:142.0px;top:217.15px;font-size:14px;line-height:14px;color:#222;white-space:nowrap;transform:translateX(-50%) ;transform-origin:50% 50%;">C</div><div style="position:absolute;left:187.0px;top:217.15px;font-size:14px;line-height:14px;color:#222;white-space:nowrap;transform:translateX(-50%) ;transform-origin:50% 50%;">D</div><div style="position:absolute;left:232.0px;top:217.15px;font-size:14px;line-height:14px;color:#222;white-space:nowrap;transform:translateX(-50%) ;transform-origin:50% 50%;">E</div><div style="position:absolute;left:277.0px;top:217.15px;font-size:14px;line-height:14px;color:#222;white-space:nowrap;transform:translateX(-50%) ;transform-origin:50% 50%;">F</div><div style="position:absolute;left:322.0px;top:217.15px;font-size:14px;line-height:14px;color:#222;white-space:nowrap;transform:translateX(-50%) ;transform-origin:50% 50%;">G</div><div style="position:absolute;left:367.0px;top:217.15px;font-size:14px;line-height:14px;color:#222;white-space:nowrap;transform:translateX(-50%) ;transform-origin:50% 50%;">H</div><div style="position:absolute;left:412.0px;top:217.15px;font-size:14px;line-height:14px;color:#222;white-space:nowrap;transform:translateX(-50%) ;transform-origin:50% 50%;">I</div><div style="position:absolute;left:457.0px;top:217.15px;font-size:14px;line-height:14px;color:#222;white-space:nowrap;transform:translateX(-50%) ;transform-origin:50% 50%;">J</div><div style="position:absolute;left:502.0px;top:217.15px;font-size:14px;line-height:14px;color:#222;white-space:nowrap;transform:translateX(-50%) ;transform-origin:50% 50%;">K</div><div style="position:absolute;left:547.0px;top:217.15px;font-size:14px;line-height:14px;color:#222;white-space:nowrap;transform:translateX(-50%) ;transform-origin:50% 50%;">L</div><div style="position:absolute;left:600.0px;top:217.15px;font-size:14px;line-height:14px;color:#217346;white-space:nowrap;transform:translateX(-50%) ;transform-origin:50% 50%;">M</div><div style="position:absolute;left:661.0px;top:217.15px;font-size:14px;line-height:14px;color:#217346;white-space:nowrap;transform:translateX(-50%) ;transform-origin:50% 50%;">N</div><div style="position:absolute;left:722.0px;top:217.15px;font-size:14px;line-height:14px;color:#217346;white-space:nowrap;transform:translateX(-50%) ;transform-origin:50% 50%;">O</div><div style="position:absolute;left:783.0px;top:217.15px;font-size:14px;line-height:14px;color:#217346;white-space:nowrap;transform:translateX(-50%) ;transform-origin:50% 50%;">P</div><div style="position:absolute;left:844.0px;top:217.15px;font-size:14px;line-height:14px;color:#217346;white-space:nowrap;transform:translateX(-50%) ;transform-origin:50% 50%;">Q</div><div style="position:absolute;left:905.0px;top:217.15px;font-size:14px;line-height:14px;color:#217346;white-space:nowrap;transform:translateX(-50%) ;transform-origin:50% 50%;">R</div><div style="position:absolute;left:966.0px;top:217.15px;font-size:14px;line-height:14px;color:#217346;white-space:nowrap;transform:translateX(-50%) ;transform-origin:50% 50%;">S</div><div style="position:absolute;left:1027.0px;top:217.15px;font-size:14px;line-height:14px;color:#217346;white-space:nowrap;transform:translateX(-50%) ;transform-origin:50% 50%;">T</div><div style="position:absolute;left:1088.0px;top:217.15px;font-size:14px;line-height:14px;color:#217346;white-space:nowrap;transform:translateX(-50%) ;transform-origin:50% 50%;">U</div><div style="position:absolute;left:1149.0px;top:217.15px;font-size:14px;line-height:14px;color:#217346;white-space:nowrap;transform:translateX(-50%) ;transform-origin:50% 50%;">V</div><div style="position:absolute;left:1210.0px;top:217.15px;font-size:14px;line-height:14px;color:#217346;white-space:nowrap;transform:translateX(-50%) ;transform-origin:50% 50%;">W</div><div style="position:absolute;left:1271.0px;top:217.15px;font-size:14px;line-height:14px;color:#217346;white-space:nowrap;transform:translateX(-50%) ;transform-origin:50% 50%;">X</div><div id="t87" style="position:absolute;left:14px;top:235.15px;font-size:14px;line-height:14px;color:#262626;white-space:nowrap;transform:translateX(-50%) scaleX(0.8593);transform-origin:50% 50%;">1</div><div id="t88" style="position:absolute;left:14px;top:253.15px;font-size:14px;line-height:14px;color:#262626;white-space:nowrap;transform:translateX(-50%) scaleX(0.8593);transform-origin:50% 50%;">2</div><div id="t89" style="position:absolute;left:14px;top:271.15px;font-size:14px;line-height:14px;color:#217346;white-space:nowrap;transform:translateX(-50%) scaleX(0.8593);transform-origin:50% 50%;">3</div><div id="t90" style="position:absolute;left:14px;top:289.15px;font-size:14px;line-height:14px;color:#217346;white-space:nowrap;transform:translateX(-50%) scaleX(0.8593);transform-origin:50% 50%;">4</div><div id="t91" style="position:absolute;left:14px;top:307.15px;font-size:14px;line-height:14px;color:#217346;white-space:nowrap;transform:translateX(-50%) scaleX(0.8593);transform-origin:50% 50%;">5</div><div id="t92" style="position:absolute;left:14px;top:325.15px;font-size:14px;line-height:14px;color:#217346;white-space:nowrap;transform:translateX(-50%) scaleX(0.8593);transform-origin:50% 50%;">6</div><div id="t93" style="position:absolute;left:14px;top:343.15px;font-size:14px;line-height:14px;color:#262626;white-space:nowrap;transform:translateX(-50%) scaleX(0.8593);transform-origin:50% 50%;">7</div><div id="t94" style="position:absolute;left:14px;top:361.15px;font-size:14px;line-height:14px;color:#262626;white-space:nowrap;transform:translateX(-50%) scaleX(0.8593);transform-origin:50% 50%;">8</div><div id="t95" style="position:absolute;left:14px;top:379.15px;font-size:14px;line-height:14px;color:#262626;white-space:nowrap;transform:translateX(-50%) scaleX(0.8593);transform-origin:50% 50%;">9</div><div id="t96" style="position:absolute;left:14.5px;top:397.15px;font-size:14px;line-height:14px;color:#262626;white-space:nowrap;transform:translateX(-50%) scaleX(0.9565);transform-origin:50% 50%;">10</div><div id="t97" style="position:absolute;left:14.5px;top:415.15px;font-size:14px;line-height:14px;color:#262626;white-space:nowrap;transform:translateX(-50%) scaleX(1.0243);transform-origin:50% 50%;">11</div><div id="t98" style="position:absolute;left:14.5px;top:433.15px;font-size:14px;line-height:14px;color:#262626;white-space:nowrap;transform:translateX(-50%) scaleX(0.9565);transform-origin:50% 50%;">12</div><div id="t99" style="position:absolute;left:14.5px;top:451.15px;font-size:14px;line-height:14px;color:#262626;white-space:nowrap;transform:translateX(-50%) scaleX(0.9565);transform-origin:50% 50%;">13</div><div id="t100" style="position:absolute;left:14.5px;top:469.15px;font-size:14px;line-height:14px;color:#262626;white-space:nowrap;transform:translateX(-50%) scaleX(0.9565);transform-origin:50% 50%;">14</div><div id="t101" style="position:absolute;left:14.5px;top:487.15px;font-size:14px;line-height:14px;color:#262626;white-space:nowrap;transform:translateX(-50%) scaleX(0.9565);transform-origin:50% 50%;">15</div><div id="t102" style="position:absolute;left:14.5px;top:505.15px;font-size:14px;line-height:14px;color:#262626;white-space:nowrap;transform:translateX(-50%) scaleX(0.9565);transform-origin:50% 50%;">16</div><div id="t103" style="position:absolute;left:14.5px;top:523.15px;font-size:14px;line-height:14px;color:#262626;white-space:nowrap;transform:translateX(-50%) scaleX(0.9565);transform-origin:50% 50%;">17</div><div id="t104" style="position:absolute;left:14.5px;top:541.15px;font-size:14px;line-height:14px;color:#262626;white-space:nowrap;transform:translateX(-50%) scaleX(0.9565);transform-origin:50% 50%;">18</div><div id="t105" style="position:absolute;left:14.5px;top:559.15px;font-size:14px;line-height:14px;color:#262626;white-space:nowrap;transform:translateX(-50%) scaleX(0.9565);transform-origin:50% 50%;">19</div><div id="t106" style="position:absolute;left:14.5px;top:577.15px;font-size:14px;line-height:14px;color:#262626;white-space:nowrap;transform:translateX(-50%) scaleX(0.9565);transform-origin:50% 50%;">20</div><div id="t107" style="position:absolute;left:14.5px;top:595.15px;font-size:14px;line-height:14px;color:#262626;white-space:nowrap;transform:translateX(-50%) scaleX(0.9565);transform-origin:50% 50%;">21</div><div id="t108" style="position:absolute;left:14.5px;top:613.15px;font-size:14px;line-height:14px;color:#262626;white-space:nowrap;transform:translateX(-50%) scaleX(0.9565);transform-origin:50% 50%;">22</div><div id="t109" style="position:absolute;left:14.5px;top:631.15px;font-size:14px;line-height:14px;color:#262626;white-space:nowrap;transform:translateX(-50%) scaleX(0.9565);transform-origin:50% 50%;">23</div><div style="position:absolute;left:74px;top:231px;width:1px;height:416px;background:#dadada"></div><div style="position:absolute;left:119px;top:231px;width:1px;height:416px;background:#dadada"></div><div style="position:absolute;left:164px;top:231px;width:1px;height:416px;background:#dadada"></div><div style="position:absolute;left:209px;top:231px;width:1px;height:416px;background:#dadada"></div><div style="position:absolute;left:254px;top:231px;width:1px;height:416px;background:#dadada"></div><div style="position:absolute;left:299px;top:231px;width:1px;height:416px;background:#dadada"></div><div style="position:absolute;left:344px;top:231px;width:1px;height:416px;background:#dadada"></div><div style="position:absolute;left:389px;top:231px;width:1px;height:416px;background:#dadada"></div><div style="position:absolute;left:434px;top:231px;width:1px;height:416px;background:#dadada"></div><div style="position:absolute;left:479px;top:231px;width:1px;height:416px;background:#dadada"></div><div style="position:absolute;left:524px;top:231px;width:1px;height:416px;background:#dadada"></div><div style="position:absolute;left:569px;top:231px;width:1px;height:416px;background:#dadada"></div><div style="position:absolute;left:630px;top:231px;width:1px;height:416px;background:#dadada"></div><div style="position:absolute;left:691px;top:231px;width:1px;height:416px;background:#dadada"></div><div style="position:absolute;left:752px;top:231px;width:1px;height:416px;background:#dadada"></div><div style="position:absolute;left:813px;top:231px;width:1px;height:416px;background:#dadada"></div><div style="position:absolute;left:874px;top:231px;width:1px;height:416px;background:#dadada"></div><div style="position:absolute;left:935px;top:231px;width:1px;height:416px;background:#dadada"></div><div style="position:absolute;left:996px;top:231px;width:1px;height:416px;background:#dadada"></div><div style="position:absolute;left:1057px;top:231px;width:1px;height:416px;background:#dadada"></div><div style="position:absolute;left:1118px;top:231px;width:1px;height:416px;background:#dadada"></div><div style="position:absolute;left:1179px;top:231px;width:1px;height:416px;background:#dadada"></div><div style="position:absolute;left:1240px;top:231px;width:1px;height:416px;background:#dadada"></div><div style="position:absolute;left:1301px;top:231px;width:1px;height:416px;background:#dadada"></div><div style="position:absolute;left:30px;top:249px;width:1271px;height:1px;background:#dadada"></div><div style="position:absolute;left:30px;top:267px;width:1271px;height:1px;background:#dadada"></div><div style="position:absolute;left:30px;top:285px;width:1271px;height:1px;background:#dadada"></div><div style="position:absolute;left:30px;top:303px;width:1271px;height:1px;background:#dadada"></div><div style="position:absolute;left:30px;top:321px;width:1271px;height:1px;background:#dadada"></div><div style="position:absolute;left:30px;top:339px;width:1271px;height:1px;background:#dadada"></div><div style="position:absolute;left:30px;top:357px;width:1271px;height:1px;background:#dadada"></div><div style="position:absolute;left:30px;top:375px;width:1271px;height:1px;background:#dadada"></div><div style="position:absolute;left:30px;top:393px;width:1271px;height:1px;background:#dadada"></div><div style="position:absolute;left:30px;top:411px;width:1271px;height:1px;background:#dadada"></div><div style="position:absolute;left:30px;top:429px;width:1271px;height:1px;background:#dadada"></div><div style="position:absolute;left:30px;top:447px;width:1271px;height:1px;background:#dadada"></div><div style="position:absolute;left:30px;top:465px;width:1271px;height:1px;background:#dadada"></div><div style="position:absolute;left:30px;top:483px;width:1271px;height:1px;background:#dadada"></div><div style="position:absolute;left:30px;top:501px;width:1271px;height:1px;background:#dadada"></div><div style="position:absolute;left:30px;top:519px;width:1271px;height:1px;background:#dadada"></div><div style="position:absolute;left:30px;top:537px;width:1271px;height:1px;background:#dadada"></div><div style="position:absolute;left:30px;top:555px;width:1271px;height:1px;background:#dadada"></div><div style="position:absolute;left:30px;top:573px;width:1271px;height:1px;background:#dadada"></div><div style="position:absolute;left:30px;top:591px;width:1271px;height:1px;background:#dadada"></div><div style="position:absolute;left:30px;top:609px;width:1271px;height:1px;background:#dadada"></div><div style="position:absolute;left:30px;top:627px;width:1271px;height:1px;background:#dadada"></div><div style="position:absolute;left:30px;top:645px;width:1271px;height:1px;background:#dadada"></div><div style="position:absolute;left:30px;top:249px;width:1271px;height:18px;background:#d0cece"></div><div style="position:absolute;left:30px;top:267px;width:540px;height:54px;background:#f8cbad"></div><div style="position:absolute;left:569px;top:267px;width:732px;height:72px;background:#adb9a6"></div><div style="position:absolute;left:30px;top:249px;width:1271px;height:1px;background:#000"></div><div style="position:absolute;left:30px;top:267px;width:1271px;height:1px;background:#000"></div><div style="position:absolute;left:30px;top:285px;width:539px;height:1px;background:repeating-linear-gradient(90deg,#000 0 1px,#fff 1px 2px)"></div><div style="position:absolute;left:569px;top:285px;width:732px;height:1px;background:repeating-linear-gradient(90deg,#000 0 1px,#fff 1px 2px)"></div><div style="position:absolute;left:30px;top:303px;width:539px;height:1px;background:repeating-linear-gradient(90deg,#000 0 1px,#fff 1px 2px)"></div><div style="position:absolute;left:569px;top:303px;width:732px;height:1px;background:repeating-linear-gradient(90deg,#000 0 1px,#fff 1px 2px)"></div><div style="position:absolute;left:30px;top:321px;width:1271px;height:1px;background:#000"></div><div style="position:absolute;left:569px;top:339px;width:732px;height:1px;background:#000"></div><div style="position:absolute;left:74px;top:249px;width:1px;height:73px;background:repeating-linear-gradient(180deg,#000 0 1px,#fff 1px 2px)"></div><div style="position:absolute;left:119px;top:249px;width:1px;height:73px;background:#000"></div><div style="position:absolute;left:164px;top:249px;width:1px;height:73px;background:repeating-linear-gradient(180deg,#000 0 1px,#fff 1px 2px)"></div><div style="position:absolute;left:209px;top:249px;width:1px;height:73px;background:#000"></div><div style="position:absolute;left:254px;top:249px;width:1px;height:73px;background:repeating-linear-gradient(180deg,#000 0 1px,#fff 1px 2px)"></div><div style="position:absolute;left:299px;top:249px;width:1px;height:73px;background:#000"></div><div style="position:absolute;left:344px;top:249px;width:1px;height:73px;background:repeating-linear-gradient(180deg,#000 0 1px,#fff 1px 2px)"></div><div style="position:absolute;left:389px;top:249px;width:1px;height:73px;background:#000"></div><div style="position:absolute;left:434px;top:249px;width:1px;height:73px;background:repeating-linear-gradient(180deg,#000 0 1px,#fff 1px 2px)"></div><div style="position:absolute;left:479px;top:249px;width:1px;height:73px;background:#000"></div><div style="position:absolute;left:524px;top:249px;width:1px;height:73px;background:repeating-linear-gradient(180deg,#000 0 1px,#fff 1px 2px)"></div><div style="position:absolute;left:569px;top:249px;width:1px;height:73px;background:#000"></div><div style="position:absolute;left:630px;top:267px;width:1px;height:73px;background:repeating-linear-gradient(180deg,#000 0 1px,#fff 1px 2px)"></div><div style="position:absolute;left:691px;top:249px;width:1px;height:91px;background:#000"></div><div style="position:absolute;left:752px;top:267px;width:1px;height:73px;background:repeating-linear-gradient(180deg,#000 0 1px,#fff 1px 2px)"></div><div style="position:absolute;left:813px;top:249px;width:1px;height:91px;background:#000"></div><div style="position:absolute;left:874px;top:249px;width:1px;height:91px;background:repeating-linear-gradient(180deg,#000 0 1px,#fff 1px 2px)"></div><div style="position:absolute;left:935px;top:249px;width:1px;height:91px;background:#000"></div><div style="position:absolute;left:996px;top:249px;width:1px;height:91px;background:repeating-linear-gradient(180deg,#000 0 1px,#fff 1px 2px)"></div><div style="position:absolute;left:1057px;top:249px;width:1px;height:91px;background:#000"></div><div style="position:absolute;left:1118px;top:249px;width:1px;height:91px;background:repeating-linear-gradient(180deg,#000 0 1px,#fff 1px 2px)"></div><div style="position:absolute;left:1179px;top:249px;width:1px;height:91px;background:#000"></div><div style="position:absolute;left:1240px;top:249px;width:1px;height:91px;background:repeating-linear-gradient(180deg,#000 0 1px,#fff 1px 2px)"></div><div style="position:absolute;left:1301px;top:249px;width:1px;height:91px;background:#000"></div><div id="t110" style="position:absolute;left:31px;top:236.00px;font-size:13px;line-height:13px;color:#000;white-space:nowrap;transform:scaleX(0.9885);transform-origin:0 50%;">WZggev2</div><div style="position:absolute;left:31px;top:254.00px;font-size:13px;line-height:13px;color:#000;white-space:nowrap;">A</div><div style="position:absolute;left:301px;top:254.00px;font-size:13px;line-height:13px;color:#000;white-space:nowrap;">B</div><div id="t113" style="position:absolute;right:1230px;top:272.09px;font-size:13.6px;line-height:13.6px;color:#000;white-space:nowrap;transform:scaleX(0.9732);transform-origin:100% 50%;">0.2</div><div id="t114" style="position:absolute;right:1185px;top:272.09px;font-size:13.6px;line-height:13.6px;color:#000;white-space:nowrap;transform:scaleX(1.0123);transform-origin:100% 50%;">&#8722;0.11</div><div id="t115" style="position:absolute;right:1140px;top:272.09px;font-size:13.6px;line-height:13.6px;color:#000;white-space:nowrap;transform:scaleX(0.9824);transform-origin:100% 50%;">&#8722;0.93</div><div id="t116" style="position:absolute;right:1095px;top:272.09px;font-size:13.6px;line-height:13.6px;color:#000;white-space:nowrap;transform:scaleX(0.9824);transform-origin:100% 50%;">&#8722;0.32</div><div id="t117" style="position:absolute;right:1050px;top:272.09px;font-size:13.6px;line-height:13.6px;color:#000;white-space:nowrap;transform:scaleX(0.9898);transform-origin:100% 50%;">0.81</div><div id="t118" style="position:absolute;right:1005px;top:272.09px;font-size:13.6px;line-height:13.6px;color:#000;white-space:nowrap;transform:scaleX(0.9898);transform-origin:100% 50%;">0.37</div><div id="t119" style="position:absolute;right:960px;top:272.09px;font-size:13.6px;line-height:13.6px;color:#000;white-space:nowrap;transform:scaleX(0.9898);transform-origin:100% 50%;">0.57</div><div id="t120" style="position:absolute;right:915px;top:272.09px;font-size:13.6px;line-height:13.6px;color:#000;white-space:nowrap;transform:scaleX(0.9824);transform-origin:100% 50%;">&#8722;0.91</div><div id="t121" style="position:absolute;right:870px;top:272.09px;font-size:13.6px;line-height:13.6px;color:#000;white-space:nowrap;transform:scaleX(0.9824);transform-origin:100% 50%;">&#8722;0.28</div><div id="t122" style="position:absolute;right:825px;top:272.09px;font-size:13.6px;line-height:13.6px;color:#000;white-space:nowrap;transform:scaleX(0.9824);transform-origin:100% 50%;">&#8722;0.45</div><div id="t123" style="position:absolute;right:780px;top:272.09px;font-size:13.6px;line-height:13.6px;color:#000;white-space:nowrap;transform:scaleX(0.9898);transform-origin:100% 50%;">0.25</div><div id="t124" style="position:absolute;right:735px;top:272.09px;font-size:13.6px;line-height:13.6px;color:#000;white-space:nowrap;transform:scaleX(0.9898);transform-origin:100% 50%;">0.91</div><div id="t125" style="position:absolute;right:1230px;top:290.09px;font-size:13.6px;line-height:13.6px;color:#000;white-space:nowrap;transform:scaleX(0.9686);transform-origin:100% 50%;">&#8722;0.8</div><div id="t126" style="position:absolute;right:1185px;top:290.09px;font-size:13.6px;line-height:13.6px;color:#000;white-space:nowrap;transform:scaleX(0.9824);transform-origin:100% 50%;">&#8722;0.92</div><div id="t127" style="position:absolute;right:1140px;top:290.09px;font-size:13.6px;line-height:13.6px;color:#000;white-space:nowrap;transform:scaleX(0.9824);transform-origin:100% 50%;">&#8722;0.29</div><div id="t128" style="position:absolute;right:1095px;top:290.09px;font-size:13.6px;line-height:13.6px;color:#000;white-space:nowrap;transform:scaleX(0.9898);transform-origin:100% 50%;">0.86</div><div id="t129" style="position:absolute;right:1050px;top:290.09px;font-size:13.6px;line-height:13.6px;color:#000;white-space:nowrap;transform:scaleX(0.9898);transform-origin:100% 50%;">0.64</div><div id="t130" style="position:absolute;right:1005px;top:290.09px;font-size:13.6px;line-height:13.6px;color:#000;white-space:nowrap;transform:scaleX(0.9898);transform-origin:100% 50%;">0.51</div><div id="t131" style="position:absolute;right:960px;top:290.09px;font-size:13.6px;line-height:13.6px;color:#000;white-space:nowrap;transform:scaleX(0.9898);transform-origin:100% 50%;">0.83</div><div id="t132" style="position:absolute;right:915px;top:290.09px;font-size:13.6px;line-height:13.6px;color:#000;white-space:nowrap;transform:scaleX(0.9898);transform-origin:100% 50%;">0.46</div><div id="t133" style="position:absolute;right:870px;top:290.09px;font-size:13.6px;line-height:13.6px;color:#000;white-space:nowrap;transform:scaleX(0.9898);transform-origin:100% 50%;">0.63</div><div id="t134" style="position:absolute;right:825px;top:290.09px;font-size:13.6px;line-height:13.6px;color:#000;white-space:nowrap;transform:scaleX(0.9824);transform-origin:100% 50%;">&#8722;0.19</div><div id="t135" style="position:absolute;right:780px;top:290.09px;font-size:13.6px;line-height:13.6px;color:#000;white-space:nowrap;transform:scaleX(0.9824);transform-origin:100% 50%;">&#8722;0.69</div><div id="t136" style="position:absolute;right:735px;top:290.09px;font-size:13.6px;line-height:13.6px;color:#000;white-space:nowrap;transform:scaleX(0.9898);transform-origin:100% 50%;">0.09</div><div id="t137" style="position:absolute;right:1230px;top:308.09px;font-size:13.6px;line-height:13.6px;color:#000;white-space:nowrap;transform:scaleX(0.9898);transform-origin:100% 50%;">0.71</div><div id="t138" style="position:absolute;right:1185px;top:308.09px;font-size:13.6px;line-height:13.6px;color:#000;white-space:nowrap;transform:scaleX(0.9898);transform-origin:100% 50%;">0.59</div><div id="t139" style="position:absolute;right:1140px;top:308.09px;font-size:13.6px;line-height:13.6px;color:#000;white-space:nowrap;transform:scaleX(0.9824);transform-origin:100% 50%;">&#8722;0.15</div><div id="t140" style="position:absolute;right:1095px;top:308.09px;font-size:13.6px;line-height:13.6px;color:#000;white-space:nowrap;transform:scaleX(0.9898);transform-origin:100% 50%;">0.19</div><div id="t141" style="position:absolute;right:1050px;top:308.09px;font-size:13.6px;line-height:13.6px;color:#000;white-space:nowrap;transform:scaleX(0.9732);transform-origin:100% 50%;">0.2</div><div id="t142" style="position:absolute;right:1005px;top:308.09px;font-size:13.6px;line-height:13.6px;color:#000;white-space:nowrap;transform:scaleX(0.9898);transform-origin:100% 50%;">0.94</div><div id="t143" style="position:absolute;right:960px;top:308.09px;font-size:13.6px;line-height:13.6px;color:#000;white-space:nowrap;transform:scaleX(0.9898);transform-origin:100% 50%;">0.24</div><div id="t144" style="position:absolute;right:915px;top:308.09px;font-size:13.6px;line-height:13.6px;color:#000;white-space:nowrap;transform:scaleX(0.9824);transform-origin:100% 50%;">&#8722;1.33</div><div id="t145" style="position:absolute;right:870px;top:308.09px;font-size:13.6px;line-height:13.6px;color:#000;white-space:nowrap;transform:scaleX(0.9824);transform-origin:100% 50%;">&#8722;0.56</div><div id="t146" style="position:absolute;right:825px;top:308.09px;font-size:13.6px;line-height:13.6px;color:#000;white-space:nowrap;transform:scaleX(0.9824);transform-origin:100% 50%;">&#8722;0.67</div><div id="t147" style="position:absolute;right:780px;top:308.09px;font-size:13.6px;line-height:13.6px;color:#000;white-space:nowrap;transform:scaleX(0.9732);transform-origin:100% 50%;">0.9</div><div id="t148" style="position:absolute;right:735px;top:308.09px;font-size:13.6px;line-height:13.6px;color:#000;white-space:nowrap;transform:scaleX(0.9898);transform-origin:100% 50%;">1.25</div><div id="t149" style="position:absolute;right:613px;top:272.09px;font-size:13.6px;line-height:13.6px;color:#000;white-space:nowrap;transform:scaleX(0.9974);transform-origin:100% 50%;">&#8722;0.5609</div><div id="t150" style="position:absolute;right:552px;top:272.09px;font-size:13.6px;line-height:13.6px;color:#000;white-space:nowrap;transform:scaleX(1.0093);transform-origin:100% 50%;">1.16735</div><div id="t151" style="position:absolute;right:674px;top:290.09px;font-size:13.6px;line-height:13.6px;color:#000;white-space:nowrap;transform:scaleX(1.0093);transform-origin:100% 50%;">1.64414</div><div id="t152" style="position:absolute;right:613px;top:290.09px;font-size:13.6px;line-height:13.6px;color:#000;white-space:nowrap;transform:scaleX(1.0093);transform-origin:100% 50%;">0.60894</div><div id="t153" style="position:absolute;right:552px;top:290.09px;font-size:13.6px;line-height:13.6px;color:#000;white-space:nowrap;transform:scaleX(1.0093);transform-origin:100% 50%;">0.57217</div><div id="t154" style="position:absolute;right:674px;top:308.09px;font-size:13.6px;line-height:13.6px;color:#000;white-space:nowrap;transform:scaleX(0.9974);transform-origin:100% 50%;">&#8722;0.1035</div><div id="t155" style="position:absolute;right:613px;top:308.09px;font-size:13.6px;line-height:13.6px;color:#000;white-space:nowrap;transform:scaleX(1.0093);transform-origin:100% 50%;">1.14343</div><div id="t156" style="position:absolute;right:552px;top:308.09px;font-size:13.6px;line-height:13.6px;color:#000;white-space:nowrap;transform:scaleX(1.0093);transform-origin:100% 50%;">0.21464</div><div id="t157" style="position:absolute;right:674px;top:326.09px;font-size:13.6px;line-height:13.6px;color:#000;white-space:nowrap;transform:scaleX(0.8727);transform-origin:100% 50%;">0</div><div id="t158" style="position:absolute;right:613px;top:326.09px;font-size:13.6px;line-height:13.6px;color:#000;white-space:nowrap;transform:scaleX(0.8727);transform-origin:100% 50%;">0</div><div id="t159" style="position:absolute;right:552px;top:326.09px;font-size:13.6px;line-height:13.6px;color:#000;white-space:nowrap;transform:scaleX(0.8727);transform-origin:100% 50%;">0</div><div id="t160" style="position:absolute;right:3px;top:272.09px;font-size:13.6px;line-height:13.6px;color:#000;white-space:nowrap;transform:scaleX(0.9974);transform-origin:100% 50%;">&#8722;0.4665</div><div id="t161" style="position:absolute;right:3px;top:290.09px;font-size:13.6px;line-height:13.6px;color:#000;white-space:nowrap;transform:scaleX(1.0093);transform-origin:100% 50%;">0.09357</div><div id="t162" style="position:absolute;right:3px;top:308.09px;font-size:13.6px;line-height:13.6px;color:#000;white-space:nowrap;transform:scaleX(0.9974);transform-origin:100% 50%;">&#8722;0.3324</div><div id="t163" style="position:absolute;right:3px;top:326.09px;font-size:13.6px;line-height:13.6px;color:#000;white-space:nowrap;transform:scaleX(0.8727);transform-origin:100% 50%;">0</div><div id="t164" style="position:absolute;left:572px;top:254.00px;font-size:13px;line-height:13px;color:#000;white-space:nowrap;transform:scaleX(1.0079);transform-origin:0 50%;">Eigenvalues（Alpha</div><div id="t165" style="position:absolute;left:694px;top:254.00px;font-size:13px;line-height:13px;color:#000;white-space:nowrap;transform:scaleX(1.0079);transform-origin:0 50%;">Eigenvalues（Alpha</div><div id="t166" style="position:absolute;right:0px;top:254.00px;font-size:13px;line-height:13px;color:#000;white-space:nowrap;transform:scaleX(1.0911);transform-origin:100% 50%;">Eigenvectors</div><div style="position:absolute;left:570px;top:268px;width:60px;height:18px;background:#e2efda"></div><div id="t167" style="position:absolute;left:571px;top:272.00px;font-size:13px;line-height:13px;color:#000;white-space:nowrap;transform:scaleX(0.9917);transform-origin:0 50%;">G3:L5&nbsp;)</div><div style="position:absolute;left:568px;top:266px;width:733px;height:2px;background:#217346"></div><div style="position:absolute;left:568px;top:266px;width:2px;height:75px;background:#217346"></div><div style="position:absolute;left:568px;top:339px;width:733px;height:2px;background:#217346"></div><div style="position:absolute;left:570px;top:338px;width:731px;height:1px;background:#fff"></div><div style="position:absolute;left:570px;top:286px;width:1px;height:53px;background:#fff"></div><div style="position:absolute;left:29px;top:231px;width:1272px;height:1px;background:#ababab"></div><div style="position:absolute;left:569px;top:230px;width:732px;height:2px;background:#217346"></div><div style="position:absolute;left:28px;top:267px;width:2px;height:72px;background:#217346"></div><div style="position:absolute;left:765px;top:220px;width:483px;height:388px;background:#f0f0f0;border:1px solid #7a7a7a;box-shadow:0 4px 16px rgba(0,0,0,0.34)"></div><div style="position:absolute;left:766px;top:221px;width:481px;height:30px;background:#fff"></div><div id="t168" style="position:absolute;left:775px;top:229.84px;font-size:12px;line-height:12px;color:#000;white-space:nowrap;transform:scaleX(0.9500);transform-origin:0 50%;">関数の引数</div><div id="t169" style="position:absolute;left:1176px;top:228.15px;font-size:14px;line-height:14px;color:#000;white-space:nowrap;transform:scaleX(0.8337);transform-origin:0 50%;-webkit-text-stroke:0.3px #000">?</div><svg style="position:absolute;left:1219px;top:230px;" width="11" height="11" viewBox="0 0 11 11"><path d="M.3 .3l10.4 10.4M10.7 .3l-10.4 10.4" stroke="#000" stroke-width="1.1"/></svg><div style="position:absolute;left:772px;top:266px;width:468px;height:153px;border:1px solid #dcdcdc"></div><div style="position:absolute;left:776px;top:259px;width:60px;height:14px;background:#f0f0f0"></div><div id="t170" style="position:absolute;left:779px;top:260.00px;font-size:13px;line-height:13px;color:#000;white-space:nowrap;transform:scaleX(0.9705);transform-origin:0 50%;">WZggev2</div><div id="t171" style="position:absolute;right:483px;top:287.00px;font-size:13px;line-height:13px;color:#000;white-space:nowrap;transform:scaleX(0.9529);transform-origin:100% 50%;">JobVl</div><div style="position:absolute;left:826px;top:282px;width:198px;height:23px;background:#fff;border:1px solid #a6a6a6"></div><div style="position:absolute;left:1002px;top:282px;width:22px;height:23px;background:#e1e1e1;border:1px solid #a6a6a6;border-width:1px 2px 2px 1px"></div><div style="position:absolute;left:1005px;top:286px;width:15px;height:13px;background:#fff"></div><svg style="position:absolute;left:1008px;top:287px;" width="9" height="11" viewBox="0 0 9 11"><path d="M4.5 0l4.2 4.2h-3.1v3.8h-2.2v-3.8h-3.1z" fill="#000"/><path d="M0 9.5h9" stroke="#000" stroke-width="1.3"/></svg><div style="position:absolute;left:830px;top:285px;width:18px;height:15px;background:#c8c8c8"></div><div style="position:absolute;left:830px;top:287.00px;font-size:13px;line-height:13px;color:#000;white-space:nowrap;">&quot;V&quot;</div><div style="position:absolute;left:1034px;top:288.00px;font-size:13px;line-height:13px;color:#000;white-space:nowrap;">=</div><div id="t174" style="position:absolute;left:1052px;top:288.00px;font-size:13px;line-height:13px;color:#000;white-space:nowrap;transform:scaleX(1.0052);transform-origin:0 50%;">&quot;V&quot;</div><div id="t175" style="position:absolute;right:483px;top:314.00px;font-size:13px;line-height:13px;color:#000;white-space:nowrap;transform:scaleX(0.9258);transform-origin:100% 50%;">JobVr</div><div style="position:absolute;left:826px;top:309px;width:198px;height:23px;background:#fff;border:1px solid #a6a6a6"></div><div style="position:absolute;left:1002px;top:309px;width:22px;height:23px;background:#e1e1e1;border:1px solid #a6a6a6;border-width:1px 2px 2px 1px"></div><div style="position:absolute;left:1005px;top:313px;width:15px;height:13px;background:#fff"></div><svg style="position:absolute;left:1008px;top:314px;" width="9" height="11" viewBox="0 0 9 11"><path d="M4.5 0l4.2 4.2h-3.1v3.8h-2.2v-3.8h-3.1z" fill="#000"/><path d="M0 9.5h9" stroke="#000" stroke-width="1.3"/></svg><div style="position:absolute;left:830px;top:314.00px;font-size:13px;line-height:13px;color:#000;white-space:nowrap;">&quot;V&quot;</div><div style="position:absolute;left:1034px;top:315.00px;font-size:13px;line-height:13px;color:#000;white-space:nowrap;">=</div><div id="t178" style="position:absolute;left:1052px;top:315.00px;font-size:13px;line-height:13px;color:#000;white-space:nowrap;transform:scaleX(1.0052);transform-origin:0 50%;">&quot;V&quot;</div><div id="t179" style="position:absolute;right:483px;top:341.00px;font-size:13px;line-height:13px;color:#000;white-space:nowrap;transform:scaleX(1.0649);transform-origin:100% 50%;">N</div><div style="position:absolute;left:826px;top:336px;width:198px;height:23px;background:#fff;border:1px solid #a6a6a6"></div><div style="position:absolute;left:1002px;top:336px;width:22px;height:23px;background:#e1e1e1;border:1px solid #a6a6a6;border-width:1px 2px 2px 1px"></div><div style="position:absolute;left:1005px;top:340px;width:15px;height:13px;background:#fff"></div><svg style="position:absolute;left:1008px;top:341px;" width="9" height="11" viewBox="0 0 9 11"><path d="M4.5 0l4.2 4.2h-3.1v3.8h-2.2v-3.8h-3.1z" fill="#000"/><path d="M0 9.5h9" stroke="#000" stroke-width="1.3"/></svg><div style="position:absolute;left:830px;top:341.00px;font-size:13px;line-height:13px;color:#000;white-space:nowrap;">3</div><div style="position:absolute;left:1034px;top:342.00px;font-size:13px;line-height:13px;color:#000;white-space:nowrap;">=</div><div id="t182" style="position:absolute;left:1052px;top:342.00px;font-size:13px;line-height:13px;color:#000;white-space:nowrap;transform:scaleX(1.1058);transform-origin:0 50%;">3</div><div id="t183" style="position:absolute;right:483px;top:368.00px;font-size:13px;line-height:13px;color:#000;white-space:nowrap;transform:scaleX(1.1532);transform-origin:100% 50%;">A</div><div style="position:absolute;left:826px;top:363px;width:198px;height:23px;background:#fff;border:1px solid #a6a6a6"></div><div style="position:absolute;left:1002px;top:363px;width:22px;height:23px;background:#e1e1e1;border:1px solid #a6a6a6;border-width:1px 2px 2px 1px"></div><div style="position:absolute;left:1005px;top:367px;width:15px;height:13px;background:#fff"></div><svg style="position:absolute;left:1008px;top:368px;" width="9" height="11" viewBox="0 0 9 11"><path d="M4.5 0l4.2 4.2h-3.1v3.8h-2.2v-3.8h-3.1z" fill="#000"/><path d="M0 9.5h9" stroke="#000" stroke-width="1.3"/></svg><div style="position:absolute;left:830px;top:368.00px;font-size:13px;line-height:13px;color:#000;white-space:nowrap;">A3:F5</div><div style="position:absolute;left:1034px;top:369.00px;font-size:13px;line-height:13px;color:#000;white-space:nowrap;">=</div><div id="t186" style="position:absolute;left:1052px;top:369.00px;font-size:13px;line-height:13px;color:#000;white-space:nowrap;transform:scaleX(1.0420);transform-origin:0 50%;">{0.2,-0.11,-0.93,-0.32,0.81,0...</div><div id="t187" style="position:absolute;right:483px;top:395.00px;font-size:13px;line-height:13px;color:#000;white-space:nowrap;transform:scaleX(1.0378);transform-origin:100% 50%;">B</div><div style="position:absolute;left:826px;top:390px;width:198px;height:23px;background:#fff;border:1px solid #a6a6a6"></div><div style="position:absolute;left:1002px;top:390px;width:22px;height:23px;background:#e1e1e1;border:1px solid #a6a6a6;border-width:1px 2px 2px 1px"></div><div style="position:absolute;left:1005px;top:394px;width:15px;height:13px;background:#fff"></div><svg style="position:absolute;left:1008px;top:395px;" width="9" height="11" viewBox="0 0 9 11"><path d="M4.5 0l4.2 4.2h-3.1v3.8h-2.2v-3.8h-3.1z" fill="#000"/><path d="M0 9.5h9" stroke="#000" stroke-width="1.3"/></svg><div style="position:absolute;left:830px;top:395.00px;font-size:13px;line-height:13px;color:#000;white-space:nowrap;">G3:L5</div><div style="position:absolute;left:1034px;top:396.00px;font-size:13px;line-height:13px;color:#000;white-space:nowrap;">=</div><div id="t190" style="position:absolute;left:1052px;top:396.00px;font-size:13px;line-height:13px;color:#000;white-space:nowrap;transform:scaleX(1.0363);transform-origin:0 50%;">{0.57,-0.91,-0.28,-0.45,0.25,...</div><div style="position:absolute;left:1034px;top:426.00px;font-size:13px;line-height:13px;color:#000;white-space:nowrap;">=</div><div id="t192" style="position:absolute;left:1052px;top:426.00px;font-size:13px;line-height:13px;color:#000;white-space:nowrap;transform:scaleX(1.0114);transform-origin:0 50%;">{-0.998771666744693,-0.56...</div><div id="t193" style="position:absolute;left:772px;top:446.84px;font-size:12px;line-height:12px;color:#000;white-space:nowrap;transform:scaleX(1.0166);transform-origin:0 50%;">一般化固有値問題 (一般複素行列) (実数部／虚数部分離形式)</div><div id="t194" style="position:absolute;left:940px;top:473.84px;font-size:12px;line-height:12px;color:#000;white-space:nowrap;transform:scaleX(0.9349);transform-origin:0 50%;">JobVl&nbsp; ：左固有ベクトル計算指定 (N または V)</div><div style="position:absolute;left:772px;top:530px;width:468px;height:1px;background:#dcdcdc"></div><div id="t195" style="position:absolute;left:772px;top:546.84px;font-size:12px;line-height:12px;color:#000;white-space:nowrap;transform:scaleX(1.0296);transform-origin:0 50%;">数式の結果 = &nbsp;&nbsp;-0.998771667</div><div id="t196" style="position:absolute;left:772px;top:579.84px;font-size:12px;line-height:12px;color:#0066cc;white-space:nowrap;transform:scaleX(0.8875);transform-origin:0 50%;"><u>この関数のヘルプ(H)</u></div><div style="position:absolute;left:1082px;top:573px;width:74px;height:25px;background:#e1e1e1;border:2px solid #0078d7"></div><div style="position:absolute;left:1119px;top:580.00px;font-size:13px;line-height:13px;color:#000;white-space:nowrap;transform:translateX(-50%) ;transform-origin:50% 50%;">OK</div><div style="position:absolute;left:1166px;top:573px;width:74px;height:25px;background:#e1e1e1;border:1px solid #adadad"></div><div id="t198" style="position:absolute;left:1202.5px;top:580.00px;font-size:13px;line-height:13px;color:#000;white-space:nowrap;transform:translateX(-50%) scaleX(0.7385);transform-origin:50% 50%;">キャンセル</div>
</body></html>
